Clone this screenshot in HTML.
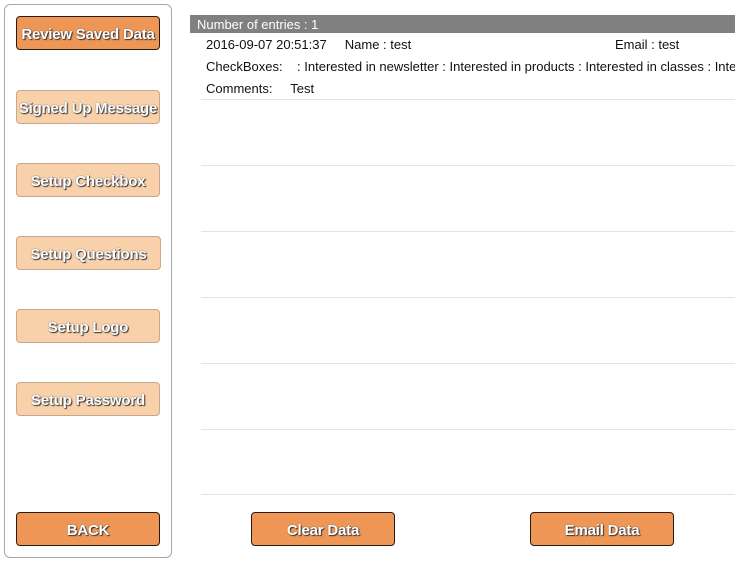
<!DOCTYPE html><html><head><style>
body{margin:0;width:750px;height:563px;background:#fff;font-family:"Liberation Sans",sans-serif;position:relative;overflow:hidden}
.side{position:absolute;left:4px;top:4px;width:166px;height:552px;border:1px solid #a8a8a8;border-radius:6px}
.b{position:absolute;width:142px;height:32px;border-radius:4px;color:#fff;font-weight:bold;font-size:15px;text-align:center;line-height:35px;text-shadow:1px 1px 1px #333,0 0 1px #333;letter-spacing:-0.2px;white-space:nowrap}
.d{background:#ee9655;border:1px solid #2a1a10}
.l{background:#f8d0aa;border:1px solid #c8a88c}
.hdr{position:absolute;left:190px;top:15px;width:538px;height:18px;background:#808080;color:#fff;font-size:13px;line-height:19px;padding-left:7px}
.t{position:absolute;font-size:13px;color:#111;white-space:nowrap}
.ln{position:absolute;left:201px;width:534px;height:1px;background:#e4e4e4}
</style></head><body>
<div class="side"></div>
<div class="b d" style="left:16px;top:16px">Review Saved Data</div>
<div class="b l" style="left:16px;top:90px">Signed Up Message</div>
<div class="b l" style="left:16px;top:163px">Setup Checkbox</div>
<div class="b l" style="left:16px;top:236px;width:143px">Setup Questions</div>
<div class="b l" style="left:16px;top:309px">Setup Logo</div>
<div class="b l" style="left:16px;top:382px">Setup Password</div>
<div class="b d" style="left:16px;top:512px">BACK</div>
<div class="b d" style="left:251px;top:512px">Clear Data</div>
<div class="b d" style="left:530px;top:512px">Email Data</div>
<div class="hdr">Number of entries : 1</div>
<div class="t" style="left:206px;top:37px">2016-09-07 20:51:37&nbsp;&nbsp;&nbsp;&nbsp; Name : test</div>
<div class="t" style="left:615px;top:37px">Email : test</div>
<div class="t" style="left:206px;top:59px;width:529px;overflow:hidden">CheckBoxes:&nbsp;&nbsp;&nbsp; : Interested in newsletter : Interested in products : Interested in classes : Interested</div>
<div class="t" style="left:206px;top:81px">Comments:&nbsp;&nbsp;&nbsp;&nbsp; Test</div>
<div class="ln" style="top:99px"></div><div class="ln" style="top:165px"></div><div class="ln" style="top:231px"></div><div class="ln" style="top:297px"></div><div class="ln" style="top:363px"></div><div class="ln" style="top:429px"></div><div class="ln" style="top:494px"></div>
</body></html>
